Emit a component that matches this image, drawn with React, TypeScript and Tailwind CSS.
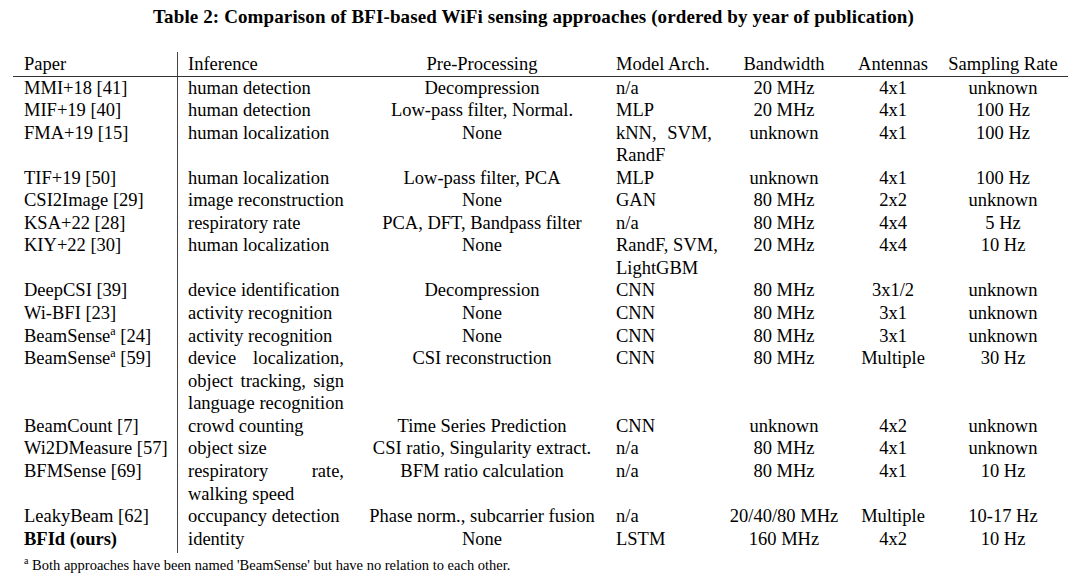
import React from "react";

const Sup = () => (
  <span className="align-super text-[12px] leading-none">a</span>
);

const J = ({ lines }: { lines: string[] }) => (
  <div>
    {lines.map((l, i) => (
      <div
        key={i}
        className={
          i < lines.length - 1
            ? "whitespace-nowrap text-justify [text-align-last:justify]"
            : "whitespace-nowrap"
        }
      >
        {l}
      </div>
    ))}
  </div>
);

type Row = {
  paper: React.ReactNode;
  inf: string[];
  pre: string;
  model: string[];
  bw: string;
  ant: string;
  rate: string;
};

const rows: Row[] = [
  { paper: "MMI+18 [41]", inf: ["human detection"], pre: "Decompression", model: ["n/a"], bw: "20 MHz", ant: "4x1", rate: "unknown" },
  { paper: "MIF+19 [40]", inf: ["human detection"], pre: "Low-pass filter, Normal.", model: ["MLP"], bw: "20 MHz", ant: "4x1", rate: "100 Hz" },
  { paper: "FMA+19 [15]", inf: ["human localization"], pre: "None", model: ["kNN, SVM,", "RandF"], bw: "unknown", ant: "4x1", rate: "100 Hz" },
  { paper: "TIF+19 [50]", inf: ["human localization"], pre: "Low-pass filter, PCA", model: ["MLP"], bw: "unknown", ant: "4x1", rate: "100 Hz" },
  { paper: "CSI2Image [29]", inf: ["image reconstruction"], pre: "None", model: ["GAN"], bw: "80 MHz", ant: "2x2", rate: "unknown" },
  { paper: "KSA+22 [28]", inf: ["respiratory rate"], pre: "PCA, DFT, Bandpass filter", model: ["n/a"], bw: "80 MHz", ant: "4x4", rate: "5 Hz" },
  { paper: "KIY+22 [30]", inf: ["human localization"], pre: "None", model: ["RandF, SVM,", "LightGBM"], bw: "20 MHz", ant: "4x4", rate: "10 Hz" },
  { paper: "DeepCSI [39]", inf: ["device identification"], pre: "Decompression", model: ["CNN"], bw: "80 MHz", ant: "3x1/2", rate: "unknown" },
  { paper: "Wi-BFI [23]", inf: ["activity recognition"], pre: "None", model: ["CNN"], bw: "80 MHz", ant: "3x1", rate: "unknown" },
  { paper: <>BeamSense<Sup /> [24]</>, inf: ["activity recognition"], pre: "None", model: ["CNN"], bw: "80 MHz", ant: "3x1", rate: "unknown" },
  { paper: <>BeamSense<Sup /> [59]</>, inf: ["device localization,", "object tracking, sign", "language recognition"], pre: "CSI reconstruction", model: ["CNN"], bw: "80 MHz", ant: "Multiple", rate: "30 Hz" },
  { paper: "BeamCount [7]", inf: ["crowd counting"], pre: "Time Series Prediction", model: ["CNN"], bw: "unknown", ant: "4x2", rate: "unknown" },
  { paper: "Wi2DMeasure [57]", inf: ["object size"], pre: "CSI ratio, Singularity extract.", model: ["n/a"], bw: "80 MHz", ant: "4x1", rate: "unknown" },
  { paper: "BFMSense [69]", inf: ["respiratory rate,", "walking speed"], pre: "BFM ratio calculation", model: ["n/a"], bw: "80 MHz", ant: "4x1", rate: "10 Hz" },
  { paper: "LeakyBeam [62]", inf: ["occupancy detection"], pre: "Phase norm., subcarrier fusion", model: ["n/a"], bw: "20/40/80 MHz", ant: "Multiple", rate: "10-17 Hz" },
  { paper: <span className="font-bold">BFId (ours)</span>, inf: ["identity"], pre: "None", model: ["LSTM"], bw: "160 MHz", ant: "4x2", rate: "10 Hz" },
];

const grid =
  "grid grid-cols-[165px_181px_246px_118px_122px_98px_124px] leading-[22.55px]";

export default function App() {
  return (
    <div
      className="w-[1080px] h-[579px] bg-white text-black overflow-hidden"
      style={{ fontFamily: '"Liberation Serif", "DejaVu Serif", serif' }}
    >
      <div className="pt-[6px] pr-[13px] text-center text-[19px] tracking-[0.12px] font-bold leading-[22px]">
        Table 2: Comparison of BFI-based WiFi sensing approaches (ordered by year of publication)
      </div>
      <div className="ml-[13px] mt-[24px] w-[1055px] text-[18.5px]">
        <div className={grid}>
          <div className="pl-[11px] border-r border-[#444] pt-[1px]">Paper</div>
          <div className="pl-[10px] pt-[1px]">Inference</div>
          <div className="text-center pt-[1px]">Pre-Processing</div>
          <div className="pl-[11px] pt-[1px]">Model Arch.</div>
          <div className="text-center pt-[1px]">Bandwidth</div>
          <div className="text-center pr-[2px] pt-[1px]">Antennas</div>
          <div className="text-center pr-[4px] pt-[1px]">Sampling Rate</div>
        </div>
        <div className="h-px bg-[#333]" />
        {rows.map((r, i) => (
          <div key={i} className={grid}>
            <div className={"pl-[11px] border-r border-[#444] whitespace-nowrap" + (i === rows.length - 1 ? " pb-[3px]" : "")}>
              {r.paper}
            </div>
            <div className="pl-[10px] w-[166px]">
              <J lines={r.inf} />
            </div>
            <div className="text-center whitespace-nowrap">{r.pre}</div>
            <div className="pl-[11px] w-[107px]">
              <J lines={r.model} />
            </div>
            <div className="text-center whitespace-nowrap">{r.bw}</div>
            <div className="text-center pr-[2px] whitespace-nowrap">{r.ant}</div>
            <div className="text-center pr-[4px] whitespace-nowrap">{r.rate}</div>
          </div>
        ))}
      </div>
      <div className="pl-[24px] mt-[2px] text-[14.5px] leading-[20px] whitespace-nowrap">
        <span className="align-super text-[10px] leading-none">a</span>{" "}
        Both approaches have been named 'BeamSense' but have no relation to each other.
      </div>
    </div>
  );
}
